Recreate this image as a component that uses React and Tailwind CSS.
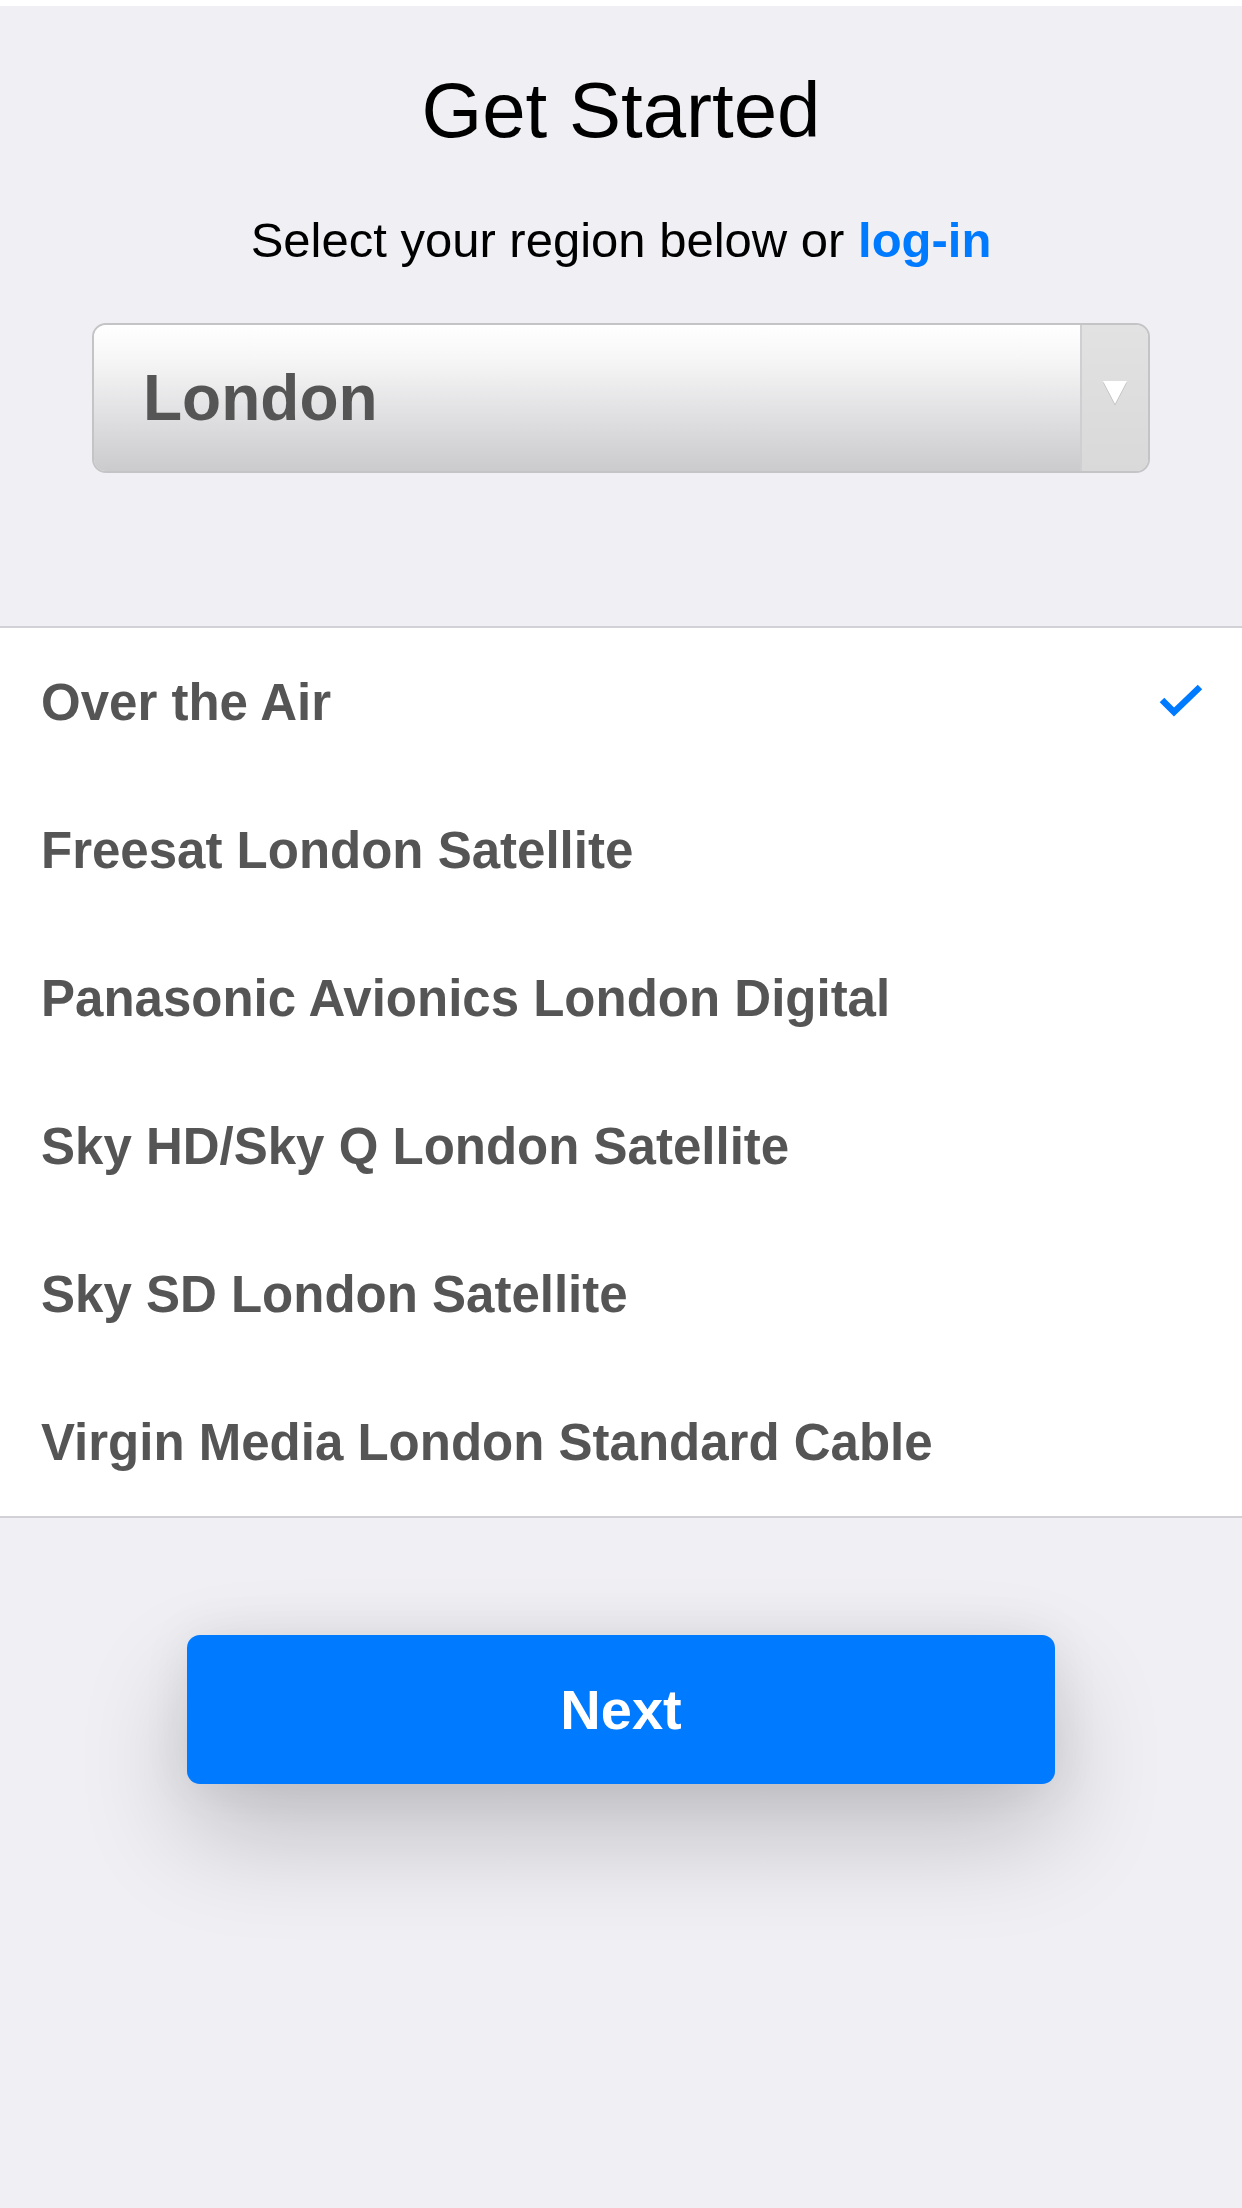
import React from "react";

const items = [
  "Over the Air",
  "Freesat London Satellite",
  "Panasonic Avionics London Digital",
  "Sky HD/Sky Q London Satellite",
  "Sky SD London Satellite",
  "Virgin Media London Standard Cable",
];

export default function App() {
  return (
    <div
      className="w-[1242px] h-[2208px] bg-[#efeff4] flex flex-col overflow-hidden"
      style={{ fontFamily: '"Liberation Sans", Arial, sans-serif' }}
    >
      <div className="h-[6px] bg-white shrink-0" />
      <h1 className="mt-[65px] text-center text-[78px] leading-[78px] text-black font-normal">
        Get Started
      </h1>
      <p className="mt-[67px] text-center text-[49px] leading-[49px] text-black">
        Select your region below or{" "}
        <span className="text-[#007aff] font-bold">log-in</span>
      </p>

      <div className="mt-[58px] mx-[92px] h-[150px] flex rounded-[14px] border-2 border-[#c4c4c7] overflow-hidden">
        <div className="flex-1 flex items-center pl-[49px] bg-[linear-gradient(to_bottom,#ffffff_0%,#f7f7f7_22%,#e4e4e6_55%,#cbcbce_100%)]">
          <span className="text-[64px] leading-[64px] font-bold text-[#555555]">London</span>
        </div>
        <div className="w-[68px] flex justify-center pt-[53px] border-l-2 border-[#cfcfd1] bg-[linear-gradient(to_bottom,#e2e2e3,#d9d9da)]">
          <svg width="28" height="28" viewBox="0 0 28 28">
            <polygon points="2,3 26,3 14,26" fill="#bdbdbd" transform="translate(0,1.5)" />
            <polygon points="2,3 26,3 14,26" fill="#ffffff" />
          </svg>
        </div>
      </div>

      <div className="mt-[153px] bg-white border-t-2 border-b-2 border-[#d2d2d6]">
        {items.map((t, i) => (
          <div key={t} className="h-[148px] flex items-center justify-between pl-[41px] pr-[38px]">
            <span className="text-[51px] leading-[51px] font-bold text-[#555555]">{t}</span>
            {i === 0 && (
              <svg width="46" height="36" viewBox="0 0 46 36" className="mr-[0px]">
                <polyline
                  points="4,16 16,28 42,3"
                  fill="none"
                  stroke="#007aff"
                  strokeWidth="6.5"
                  strokeLinecap="butt"
                  strokeLinejoin="miter"
                />
              </svg>
            )}
          </div>
        ))}
      </div>

      <div className="mt-[117px] flex justify-center">
        <button className="w-[868px] h-[149px] rounded-[13px] bg-[#007aff] text-white text-[56px] leading-[56px] font-bold shadow-[0_50px_110px_rgba(0,0,0,0.2),0_0_50px_rgba(0,0,0,0.07)]">
          Next
        </button>
      </div>
    </div>
  );
}
